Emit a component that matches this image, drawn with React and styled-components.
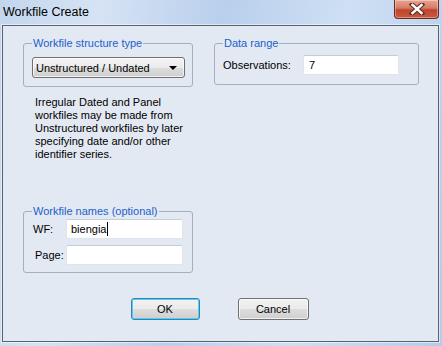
import React from "react"
import styled, { createGlobalStyle } from "styled-components"

const Global = createGlobalStyle`
  html, body {
    margin: 0;
    padding: 0;
  }
  body {
    font-family: "Liberation Sans", Arial, sans-serif;
    font-size: 11px;
    color: #000;
  }
`

const Frame = styled.div`
  width: 442px;
  height: 346px;
  box-sizing: border-box;
  display: flex;
  flex-direction: column;
  padding: 0 3px 4px 2px;
  background: linear-gradient(100deg, #c3d6ee 0%, #d6e3f4 20%, #b9cfec 45%, #cfe0f4 70%, #b4cbe9 100%);
`

const TitleBar = styled.div`
  height: 25px;
  display: flex;
  align-items: flex-start;
  justify-content: space-between;
`

const Title = styled.div`
  font-size: 12.5px;
  padding: 5px 0 0 1px;
  color: #000;
`

const CloseButton = styled.div`
  width: 45px;
  height: 19px;
  box-sizing: border-box;
  border: 1px solid #6f2a20;
  border-top: none;
  border-radius: 0 0 4px 4px;
  background: linear-gradient(#e9a591 0%, #d67a66 45%, #c0442c 55%, #c95a3f 100%);
  box-shadow: inset 0 0 0 1px rgba(255, 255, 255, 0.35);
  display: flex;
  align-items: center;
  justify-content: center;
`

const Client = styled.div`
  flex: 1;
  box-sizing: border-box;
  background: #e3e9f2;
  border: 1px solid #59636f;
  box-shadow: 0 0 0 1px rgba(255, 255, 255, 0.5);
  padding: 10px 19px 0 20px;
  display: flex;
  flex-direction: column;
`

const Top = styled.div`
  display: flex;
  gap: 21px;
  align-items: flex-start;
`

const Column = styled.div`
  display: flex;
  flex-direction: column;
  width: ${(p) => p.width}px;
`

const Group = styled.fieldset`
  margin: ${(p) => p.top || 0}px 0 0;
  padding: ${(p) => p.pad};
  border: 1px solid #a7afba;
  border-radius: 3px;
  box-sizing: border-box;
  min-width: 0;
`

const Legend = styled.legend`
  padding: 0 1px;
  margin-left: 0;
  font-size: 11px;
  line-height: 14px;
  color: #1c5fcc;
`

const Select = styled.div`
  width: 153px;
  height: 21px;
  box-sizing: border-box;
  border: 1px solid #707070;
  border-radius: 3px;
  background: linear-gradient(#f3f3f3 0%, #ebebeb 50%, #dddddd 51%, #cfcfcf 100%);
  box-shadow: inset 0 0 0 1px rgba(255, 255, 255, 0.7);
  display: flex;
  align-items: center;
  justify-content: space-between;
  padding: 0 7px 0 3px;
`

const Arrow = styled.span`
  width: 0;
  height: 0;
  border-left: 4px solid transparent;
  border-right: 4px solid transparent;
  border-top: 4px solid #000;
  margin-top: 1px;
`

const Note = styled.p`
  margin: 9px 0 0 12px;
  line-height: 13px;
`

const Row = styled.div`
  display: flex;
  align-items: center;
  margin-top: ${(p) => p.gap || 0}px;
`

const Label = styled.span`
  width: ${(p) => p.width}px;
  padding-left: ${(p) => p.indent || 0}px;
  box-sizing: border-box;
`

const Field = styled.div`
  width: ${(p) => p.width}px;
  height: 20px;
  box-sizing: border-box;
  background: #fff;
  border: 1px solid #dfe4ea;
  border-top-color: #c5ccd5;
  border-radius: 2px;
  display: flex;
  align-items: center;
  padding-left: ${(p) => p.inset || 3}px;
`

const Caret = styled.span`
  display: inline-block;
  width: 1px;
  height: 14px;
  background: #000;
  margin-left: 1px;
`

const Buttons = styled.div`
  display: flex;
  justify-content: center;
  gap: 38px;
  margin-top: 25px;
  padding-right: 3px;
`

const Button = styled.div`
  width: ${(p) => p.width}px;
  height: 22px;
  box-sizing: border-box;
  border: 1px solid ${(p) => (p.primary ? "#3c7fb1" : "#707070")};
  border-radius: 3px;
  background: linear-gradient(#f2f2f2 0%, #ebebeb 50%, #dddddd 51%, #cfcfcf 100%);
  box-shadow: inset 0 0 0 1px ${(p) => (p.primary ? "#48d3f7" : "rgba(255, 255, 255, 0.7)")};
  display: flex;
  align-items: center;
  justify-content: center;
`

export default function App() {
  return (
    <>
      <Global />
      <Frame>
        <TitleBar>
          <Title>Workfile Create</Title>
          <CloseButton>
            <svg width="16" height="12" viewBox="0 0 16 12">
              <path d="M3 1.5 L13 10.5 M13 1.5 L3 10.5" stroke="#5a2a22" strokeWidth="4.5" strokeLinecap="square" />
              <path d="M3.5 2 L12.5 10 M12.5 2 L3.5 10" stroke="#ffffff" strokeWidth="2.5" strokeLinecap="square" />
            </svg>
          </CloseButton>
        </TitleBar>
        <Client>
          <Top>
            <Column width={170}>
              <Group pad="7px 7px 8px 8px">
                <Legend>Workfile structure type</Legend>
                <Select>
                  <span>Unstructured / Undated</span>
                  <Arrow />
                </Select>
              </Group>
              <Note>
                Irregular Dated and Panel
                <br />
                workfiles may be made from
                <br />
                Unstructured workfiles by later
                <br />
                specifying date and/or other
                <br />
                identifier series.
              </Note>
              <Group top={43} pad="1px 9px 7px 8px">
                <Legend>Workfile names (optional)</Legend>
                <Row>
                  <Label width={34} indent={1}>WF:</Label>
                  <Field width={117} inset={4}>
                    biengia
                    <Caret />
                  </Field>
                </Row>
                <Row gap={6}>
                  <Label width={34} indent={3}>Page:</Label>
                  <Field width={117} />
                </Row>
              </Group>
            </Column>
            <Column width={206}>
              <Group pad="5px 8px 9px 8px">
                <Legend>Data range</Legend>
                <Row>
                  <Label width={80}>Observations:</Label>
                  <Field width={96} inset={5}>7</Field>
                </Row>
              </Group>
            </Column>
          </Top>
          <Buttons>
            <Button primary width={69}>OK</Button>
            <Button width={71}>Cancel</Button>
          </Buttons>
        </Client>
      </Frame>
    </>
  )
}
